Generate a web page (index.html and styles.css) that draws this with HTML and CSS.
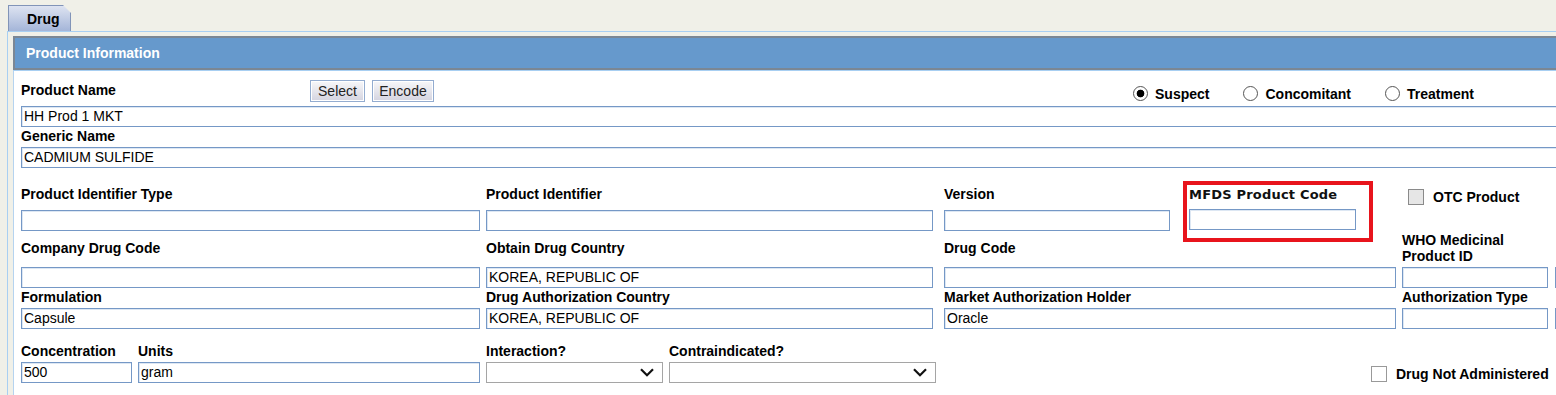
FILE: index.html
```html
<!DOCTYPE html>
<html lang="en">
<head>
    <meta charset="UTF-8">
    <meta name="viewport" content="width=device-width, initial-scale=1.0">
    <title>Drug - Product Information</title>
    <link rel="stylesheet" href="styles.css">
</head>
<body>
    <div class="tabs">
        <div class="tab">Drug</div>
    </div>

    <div class="panel">
        <div class="section">
            <div class="section-head">Product Information</div>
            <div class="section-body">
                <div class="name-row">
                    <span class="label name-label">Product Name</span>
                    <button class="btn btn-select">Select</button>
                    <button class="btn">Encode</button>
                    <div class="radios">
                        <label class="radio"><span class="dot checked"></span>Suspect</label>
                        <label class="radio"><span class="dot"></span>Concomitant</label>
                        <label class="radio"><span class="dot"></span>Treatment</label>
                    </div>
                </div>
                <input class="text-box wide" type="text" value="HH Prod 1 MKT">
                <div class="label generic-label">Generic Name</div>
                <input class="text-box wide" type="text" value="CADMIUM SULFIDE">

                <div class="row row-ids">
                    <div class="field w-459">
                        <div class="label">Product Identifier Type</div>
                        <input class="text-box" type="text">
                    </div>
                    <div class="field w-447 ml-6">
                        <div class="label">Product Identifier</div>
                        <input class="text-box" type="text">
                    </div>
                    <div class="field w-226 ml-11">
                        <div class="label">Version</div>
                        <input class="text-box" type="text">
                    </div>
                    <div class="field mfds">
                        <div class="label mfds-label">MFDS Product Code</div>
                        <input class="text-box" type="text">
                    </div>
                    <label class="check otc"><span class="box disabled"></span>OTC Product</label>
                </div>

                <div class="row row-codes">
                    <div class="field w-459">
                        <div class="label">Company Drug Code</div>
                        <input class="text-box" type="text">
                    </div>
                    <div class="field w-447 ml-6">
                        <div class="label">Obtain Drug Country</div>
                        <input class="text-box" type="text" value="KOREA, REPUBLIC OF">
                    </div>
                    <div class="field w-452 ml-11">
                        <div class="label">Drug Code</div>
                        <input class="text-box" type="text">
                    </div>
                    <div class="field w-146 ml-6">
                        <div class="label two-line">WHO Medicinal<br>Product ID</div>
                        <input class="text-box" type="text">
                    </div>
                    <div class="field w-200 ml-7">
                        <div class="label"></div>
                        <input class="text-box" type="text">
                    </div>
                </div>

                <div class="row row-auth">
                    <div class="field w-459">
                        <div class="label">Formulation</div>
                        <input class="text-box" type="text" value="Capsule">
                    </div>
                    <div class="field w-447 ml-6">
                        <div class="label">Drug Authorization Country</div>
                        <input class="text-box" type="text" value="KOREA, REPUBLIC OF">
                    </div>
                    <div class="field w-452 ml-11">
                        <div class="label">Market Authorization Holder</div>
                        <input class="text-box" type="text" value="Oracle">
                    </div>
                    <div class="field w-146 ml-6">
                        <div class="label">Authorization Type</div>
                        <input class="text-box" type="text">
                    </div>
                    <div class="field w-200 ml-7">
                        <div class="label"></div>
                        <input class="text-box" type="text">
                    </div>
                </div>

                <div class="row row-dose">
                    <div class="field w-111">
                        <div class="label">Concentration</div>
                        <input class="text-box" type="text" value="500">
                    </div>
                    <div class="field w-342 ml-6">
                        <div class="label">Units</div>
                        <input class="text-box" type="text" value="gram">
                    </div>
                    <div class="field w-177 ml-6">
                        <div class="label">Interaction?</div>
                        <div class="select-box">
                            <svg width="14" height="9" viewBox="0 0 14 9"><path d="M1 1.3l6 6 6-6" fill="none" stroke="#111" stroke-width="2.2"/></svg>
                        </div>
                    </div>
                    <div class="field w-267 ml-6">
                        <div class="label">Contraindicated?</div>
                        <div class="select-box">
                            <svg width="14" height="9" viewBox="0 0 14 9"><path d="M1 1.3l6 6 6-6" fill="none" stroke="#111" stroke-width="2.2"/></svg>
                        </div>
                    </div>
                    <label class="check not-admin"><span class="box"></span>Drug Not Administered</label>
                </div>
            </div>
        </div>
    </div>
</body>
</html>
```

FILE: styles.css
```css
html, body {
    overflow: hidden;
}
body {
    margin: 0;
    background-color: #f0f0e8;
    font-family: "Liberation Sans", Arial, sans-serif;
    font-size: 14px;
    color: #000;
}
.tabs {
    padding: 5px 0 0 8px;
    height: 26px;
}
.tab {
    width: 63px;
    height: 26px;
    box-sizing: border-box;
    padding-left: 18px;
    line-height: 26px;
    font-weight: bold;
    border: 1px solid #8194b8;
    border-bottom: none;
    background: linear-gradient(#dde3f1, #a4b5d8);
    clip-path: polygon(0 0, 55px 0, 100% 8px, 100% 100%, 0 100%);
}
.panel {
    margin-left: 7px;
    border-top: 1px solid #a8cff2;
    border-left: 1px solid #a8cff2;
    padding: 4px 0 0 5px;
}
.section-head {
    height: 30px;
    line-height: 31px;
    padding-left: 11px;
    background-color: #6699cc;
    border-top: 2px solid #7b8794;
    border-bottom: 2px solid #7b8794;
    border-left: 2px solid #7b8794;
    color: #fff;
    font-weight: bold;
}
.section-body {
    background-color: #fff;
    border-left: 1px solid #b5d3ef;
    border-top: 1px solid #a8cff2;
    padding-left: 7px;
    height: 330px;
    overflow: hidden;
}
.label {
    font-weight: bold;
    height: 16px;
    line-height: 15px;
    white-space: nowrap;
}
.text-box {
    display: block;
    box-sizing: border-box;
    width: 100%;
    height: 21px;
    margin: 0;
    padding: 0 2px 1px;
    font-family: "Liberation Sans", Arial, sans-serif;
    font-size: 14px;
    color: #000;
    background: #fff;
    border: 1px solid #7598c6;
    box-shadow: inset 1px 1px 0 #dde7f3;
    outline: none;
}
.text-box.wide {
    width: 1600px;
}

/* product name line */
.name-row {
    display: flex;
    align-items: flex-start;
    padding-top: 9px;
    height: 26px;
}
.name-label {
    width: 289px;
    height: 22px;
    line-height: 20px;
}
.btn {
    height: 22px;
    padding: 0;
    margin: 0;
    font-family: "Liberation Sans", Arial, sans-serif;
    font-size: 14px;
    color: #222;
    border: 1px solid #93acd0;
    box-shadow: inset 0 0 0 1px #fff;
    background: linear-gradient(#f7f7f9, #d4d4e0);
}
.btn-select {
    width: 55px;
    margin-right: 7px;
}
.btn + .btn {
    width: 62px;
}
.radios {
    display: flex;
    margin-left: 699px;
    margin-top: 6px;
}
.radio {
    display: flex;
    align-items: center;
    font-weight: bold;
    margin-right: 34px;
    height: 16px;
    white-space: nowrap;
}
.dot {
    width: 15px;
    height: 15px;
    box-sizing: border-box;
    border: 1px solid #555;
    border-radius: 50%;
    background: #fff;
    margin-right: 7px;
    margin-top: -1px;
}
.dot.checked {
    background: radial-gradient(circle, #000 0 3.5px, #fff 4.2px);
}
.generic-label {
    margin-top: 2px;
    margin-bottom: 2px;
}

/* field rows */
.row {
    display: flex;
    align-items: flex-start;
}
.field {
    display: flex;
    flex-direction: column;
    flex-shrink: 0;
}
.row-ids .label {
    margin: 19px 0 7px;
}
.row-codes .label {
    margin: 10px 0 10px;
}
.row-codes .label.two-line {
    height: 32px;
    line-height: 16px;
    margin: 1px 0 3px;
}
.row-auth .label {
    margin: 2px 0 2px;
}
.row-dose .label {
    margin: 15px 0 2px;
}
.w-111 { width: 111px; }
.w-146 { width: 146px; }
.w-177 { width: 177px; }
.w-200 { width: 200px; }
.w-226 { width: 226px; }
.w-267 { width: 267px; }
.w-342 { width: 342px; }
.w-447 { width: 447px; }
.w-452 { width: 452px; }
.w-459 { width: 459px; }
.ml-6 { margin-left: 6px; }
.ml-7 { margin-left: 7px; }
.ml-11 { margin-left: 11px; }

.mfds {
    width: 167px;
    margin-left: 19px;
    position: relative;
}
.row-ids .mfds-label {
    font-family: "DejaVu Sans", Verdana, sans-serif;
    font-size: 13px;
    letter-spacing: 0.2px;
    color: #111;
    margin-bottom: 6px;
}
.mfds::after {
    content: "";
    position: absolute;
    top: 13px;
    left: -6px;
    right: -17px;
    bottom: -12px;
    border: 4px solid #e8141c;
}
.select-box {
    box-sizing: border-box;
    height: 21px;
    display: flex;
    align-items: center;
    justify-content: flex-end;
    padding-right: 8px;
    border: 1px solid #a5a5a5;
    background: #fff;
}
.check {
    display: flex;
    align-items: center;
    font-weight: bold;
    white-space: nowrap;
}
.box {
    width: 16px;
    height: 16px;
    box-sizing: border-box;
    border: 1px solid #8a8a8a;
    background: #fff;
    margin-right: 9px;
}
.box.disabled {
    background: #e6e6e6;
}
.otc {
    margin-left: 52px;
    margin-top: 21px;
}
.not-admin {
    margin-left: 435px;
    margin-top: 37px;
}
.not-admin .box {
    border-color: #999;
}
```
